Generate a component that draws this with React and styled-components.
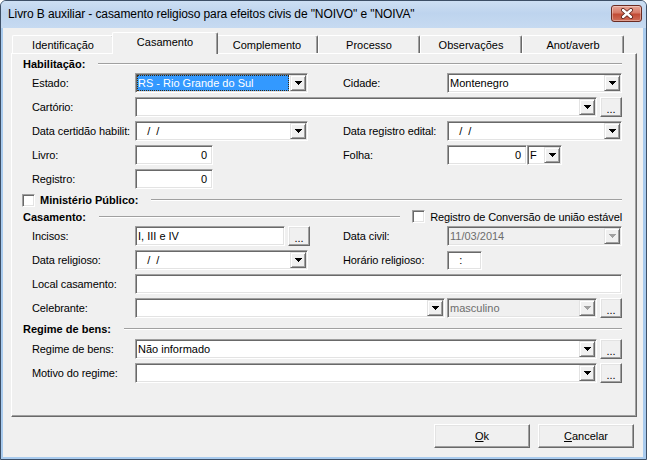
import React from 'react'
import styled, { createGlobalStyle } from 'styled-components'

const GlobalStyle = createGlobalStyle`
  html, body {
    margin: 0;
    padding: 0;
    background: #ffffff;
  }
  * {
    box-sizing: border-box;
  }
`

const Window = styled.div`
  width: 647px;
  height: 460px;
  display: flex;
  flex-direction: column;
  background: #a9cbee;
  border: 1px solid #3d4f66;
  border-radius: 6px 6px 0 0;
  font-family: "Liberation Sans", Arial, sans-serif;
  font-size: 11px;
  color: #000;
  overflow: hidden;
`

const TitleBar = styled.div`
  height: 27px;
  flex: none;
  display: flex;
  align-items: flex-start;
  justify-content: space-between;
  padding: 0 4px 0 7px;
  background: linear-gradient(to bottom, #cddff3 0%, #bed4ee 45%, #c6daf1 100%);
`

const Caption = styled.span`
  font-size: 12px;
  line-height: 26px;
  letter-spacing: -0.1px;
  white-space: nowrap;
`

const CloseButton = styled.div`
  width: 31px;
  height: 17px;
  margin-top: 4px;
  display: flex;
  align-items: center;
  justify-content: center;
  border: 1px solid #6b2b22;
  border-radius: 3px;
  background: linear-gradient(to bottom, #e7a597 0%, #d77b68 45%, #c24b35 55%, #cf6f5a 100%);
  box-shadow: inset 0 0 0 1px rgba(255, 255, 255, 0.35);
`

const Client = styled.div`
  flex: 1;
  display: flex;
  flex-direction: column;
  margin: 0 3px 2px 2px;
  padding: 4px 6px 0 8px;
  background: #f0f0f0;
`

const TabStrip = styled.div`
  height: 21px;
  flex: none;
  display: flex;
  align-items: flex-end;
  padding-left: 1px;
`

const Tab = styled.div`
  position: relative;
  z-index: ${p => (p.$active ? 2 : 1)};
  width: ${p => (p.$active ? 106 : 102)}px;
  height: ${p => (p.$active ? 22 : 18)}px;
  margin: ${p => (p.$active ? '0 -2px -1px' : '0')};
  display: flex;
  align-items: center;
  justify-content: center;
  padding-bottom: ${p => (p.$active ? 3 : 0)}px;
  background: #f0f0f0;
  border-top: 1px solid #ffffff;
  border-left: 1px solid #ffffff;
  border-right: 1px solid #696969;
  border-radius: 2px 2px 0 0;
  box-shadow: inset -1px 0 0 #a0a0a0;
  white-space: nowrap;
`

const Panel = styled.div`
  height: 364px;
  flex: none;
  display: flex;
  flex-direction: column;
  padding: 2px 14px 0 11px;
  border: 1px solid;
  border-color: #ffffff #696969 #696969 #ffffff;
  box-shadow: inset -1px -1px 0 #a0a0a0;
`

const Section = styled.div`
  height: ${p => p.$h}px;
  flex: none;
  display: flex;
  align-items: center;
`

const SectionTitle = styled.span`
  font-weight: bold;
  white-space: nowrap;
  margin-right: 13px;
`

const Rule = styled.div`
  flex: 1;
  height: 2px;
  border-top: 1px solid #a0a0a0;
  border-bottom: 1px solid #ffffff;
`

const Row = styled.div`
  height: 24px;
  flex: none;
  display: flex;
  align-items: center;
  padding-left: 9px;
`

const Cell = styled.div`
  display: flex;
  align-items: center;
  width: ${p => (p.$w ? `${p.$w}px` : 'auto')};
  flex: ${p => (p.$w ? 'none' : 1)};
`

const Label = styled.span`
  width: ${p => p.$w || 103}px;
  flex: none;
  white-space: nowrap;
  letter-spacing: -0.1px;
`

const Sunken = styled.div`
  display: flex;
  align-items: stretch;
  width: ${p => (p.$w ? `${p.$w}px` : 'auto')};
  flex: ${p => (p.$w ? 'none' : 1)};
  height: ${p => p.$h || 20}px;
  margin-right: ${p => p.$gap || 0}px;
  padding: 1px;
  border: 1px solid;
  border-color: #a0a0a0 #ffffff #ffffff #a0a0a0;
  box-shadow: inset 1px 1px 0 #696969, inset -1px -1px 0 #e3e3e3;
  background: ${p => (p.$disabled ? '#f0f0f0' : '#ffffff')};
`

const FieldText = styled.div`
  flex: 1;
  display: flex;
  align-items: center;
  justify-content: ${p => (p.$right ? 'flex-end' : 'flex-start')};
  padding: 0 ${p => (p.$right ? 3 : 1)}px 0 1px;
  margin-right: 1px;
  white-space: pre;
  overflow: hidden;
  color: ${p => (p.$selected ? '#ffffff' : p.$disabled ? '#6d6d6d' : '#000000')};
  background: ${p => (p.$selected ? '#3399ff' : 'transparent')};
  outline: ${p => (p.$selected ? '1px dotted #3a2a10' : 'none')};
  outline-offset: -1px;
`

const DropButton = styled.div`
  width: 16px;
  flex: none;
  display: flex;
  align-items: center;
  justify-content: center;
  background: #f0f0f0;
  border: 1px solid;
  border-color: #e3e3e3 #696969 #696969 #e3e3e3;
  box-shadow: inset 1px 1px 0 #ffffff, inset -1px -1px 0 #a0a0a0;
`

const DotsButton = styled.div`
  width: 22px;
  height: 20px;
  flex: none;
  display: flex;
  align-items: flex-end;
  justify-content: center;
  padding-bottom: 3px;
  line-height: 8px;
  background: #f0f0f0;
  border: 1px solid;
  border-color: #ffffff #696969 #696969 #ffffff;
  box-shadow: inset -1px -1px 0 #a0a0a0, inset 1px 1px 0 #e3e3e3;
`

const CheckBox = styled.div`
  width: 13px;
  height: 13px;
  flex: none;
  margin-right: ${p => p.$gap || 0}px;
  margin-left: ${p => p.$left || 0}px;
  background: #ffffff;
  border: 1px solid;
  border-color: #a0a0a0 #ffffff #ffffff #a0a0a0;
  box-shadow: inset 1px 1px 0 #696969, inset -1px -1px 0 #e3e3e3;
`

const CheckText = styled.span`
  white-space: nowrap;
  letter-spacing: -0.1px;
`

const ButtonRow = styled.div`
  display: flex;
  justify-content: flex-end;
  gap: 8px;
  margin-top: 7px;
  padding-right: 3px;
`

const Button = styled.div`
  width: 96px;
  height: 24px;
  display: flex;
  align-items: center;
  justify-content: center;
  background: #f0f0f0;
  border: 1px solid;
  border-color: #ffffff #696969 #696969 #ffffff;
  box-shadow: inset -1px -1px 0 #a0a0a0, inset 1px 1px 0 #e3e3e3;

  u {
    text-decoration: underline;
  }
`

const Arrow = ({ color = '#000' }) => (
  <svg width="7" height="4" viewBox="0 0 7 4" shapeRendering="crispEdges">
    <path fill={color} d="M0 0h7v1H0z M1 1h5v1H1z M2 2h3v1H2z M3 3h1v1H3z" />
  </svg>
)

const CloseX = () => (
  <svg width="14" height="11" viewBox="0 0 14 11">
    <path d="M3 2 L11 9 M11 2 L3 9" stroke="#5a2018" strokeWidth="4" strokeLinecap="round" />
    <path d="M3 2 L11 9 M11 2 L3 9" stroke="#ffffff" strokeWidth="2.4" strokeLinecap="round" />
  </svg>
)

const Combo = ({ w, value = '', selected, disabled, gap }) => (
  <Sunken $w={w} $disabled={disabled} $gap={gap}>
    <FieldText $selected={selected} $disabled={disabled}>{value}</FieldText>
    <DropButton>
      <Arrow color={disabled ? '#a0a0a0' : '#000'} />
    </DropButton>
  </Sunken>
)

const Edit = ({ w, h, value = '', right, gap }) => (
  <Sunken $w={w} $h={h} $gap={gap}>
    <FieldText $right={right}>{value}</FieldText>
  </Sunken>
)

const Dots = () => <DotsButton>...</DotsButton>

const tabs = ['Identificação', 'Casamento', 'Complemento', 'Processo', 'Observações', 'Anot/averb']

const App = () => {
  return (
    <>
      <GlobalStyle />
      <Window>
        <TitleBar>
          <Caption>Livro B auxiliar - casamento religioso para efeitos civis de "NOIVO" e "NOIVA"</Caption>
          <CloseButton>
            <CloseX />
          </CloseButton>
        </TitleBar>
        <Client>
          <TabStrip>
            {tabs.map(t => (
              <Tab key={t} $active={t === 'Casamento'}>{t}</Tab>
            ))}
          </TabStrip>
          <Panel>
            <Section $h={15}>
              <SectionTitle>Habilitação:</SectionTitle>
              <Rule />
            </Section>
            <Row>
              <Cell $w={311}>
                <Label>Estado:</Label>
                <Combo w={173} value="RS - Rio Grande do Sul" selected />
              </Cell>
              <Cell>
                <Label $w={104}>Cidade:</Label>
                <Combo w={175} value="Montenegro" />
              </Cell>
            </Row>
            <Row>
              <Cell>
                <Label>Cartório:</Label>
                <Combo gap={3} />
                <Dots />
              </Cell>
            </Row>
            <Row>
              <Cell $w={311}>
                <Label>Data certidão habilit:</Label>
                <Combo w={173} value="   /  /" />
              </Cell>
              <Cell>
                <Label $w={104}>Data registro edital:</Label>
                <Combo w={175} value="   /  /" />
              </Cell>
            </Row>
            <Row>
              <Cell $w={311}>
                <Label>Livro:</Label>
                <Edit w={78} value="0" right />
              </Cell>
              <Cell>
                <Label $w={104}>Folha:</Label>
                <Edit w={80} value="0" right />
                <Combo w={35} value="F" />
              </Cell>
            </Row>
            <Row>
              <Cell $w={311}>
                <Label>Registro:</Label>
                <Edit w={78} value="0" right />
              </Cell>
            </Row>
            <Section $h={18}>
              <CheckBox $left={-1} $gap={5} />
              <SectionTitle>Ministério Público:</SectionTitle>
              <Rule />
            </Section>
            <Section $h={15}>
              <SectionTitle>Casamento:</SectionTitle>
              <Rule />
              <CheckBox $left={12} $gap={5} />
              <CheckText>Registro de Conversão de união estável</CheckText>
            </Section>
            <Row>
              <Cell $w={311}>
                <Label>Incisos:</Label>
                <Edit w={150} value="I, III e IV" gap={3} />
                <Dots />
              </Cell>
              <Cell>
                <Label $w={104}>Data civil:</Label>
                <Combo w={175} value="11/03/2014" disabled />
              </Cell>
            </Row>
            <Row>
              <Cell $w={311}>
                <Label>Data religioso:</Label>
                <Combo w={173} value="   /  /" />
              </Cell>
              <Cell>
                <Label $w={104}>Horário religioso:</Label>
                <Edit w={35} h={19} value="   :" />
              </Cell>
            </Row>
            <Row>
              <Cell>
                <Label>Local casamento:</Label>
                <Edit />
              </Cell>
            </Row>
            <Row>
              <Cell>
                <Label>Celebrante:</Label>
                <Combo w={310} gap={2} />
                <Combo w={150} value="masculino" disabled gap={3} />
                <Dots />
              </Cell>
            </Row>
            <Section $h={17}>
              <SectionTitle>Regime de bens:</SectionTitle>
              <Rule />
            </Section>
            <Row>
              <Cell>
                <Label>Regime de bens:</Label>
                <Combo value="Não informado" gap={3} />
                <Dots />
              </Cell>
            </Row>
            <Row>
              <Cell>
                <Label>Motivo do regime:</Label>
                <Combo gap={3} />
                <Dots />
              </Cell>
            </Row>
          </Panel>
          <ButtonRow>
            <Button><u>O</u>k</Button>
            <Button><u>C</u>ancelar</Button>
          </ButtonRow>
        </Client>
      </Window>
    </>
  )
}

export default App
